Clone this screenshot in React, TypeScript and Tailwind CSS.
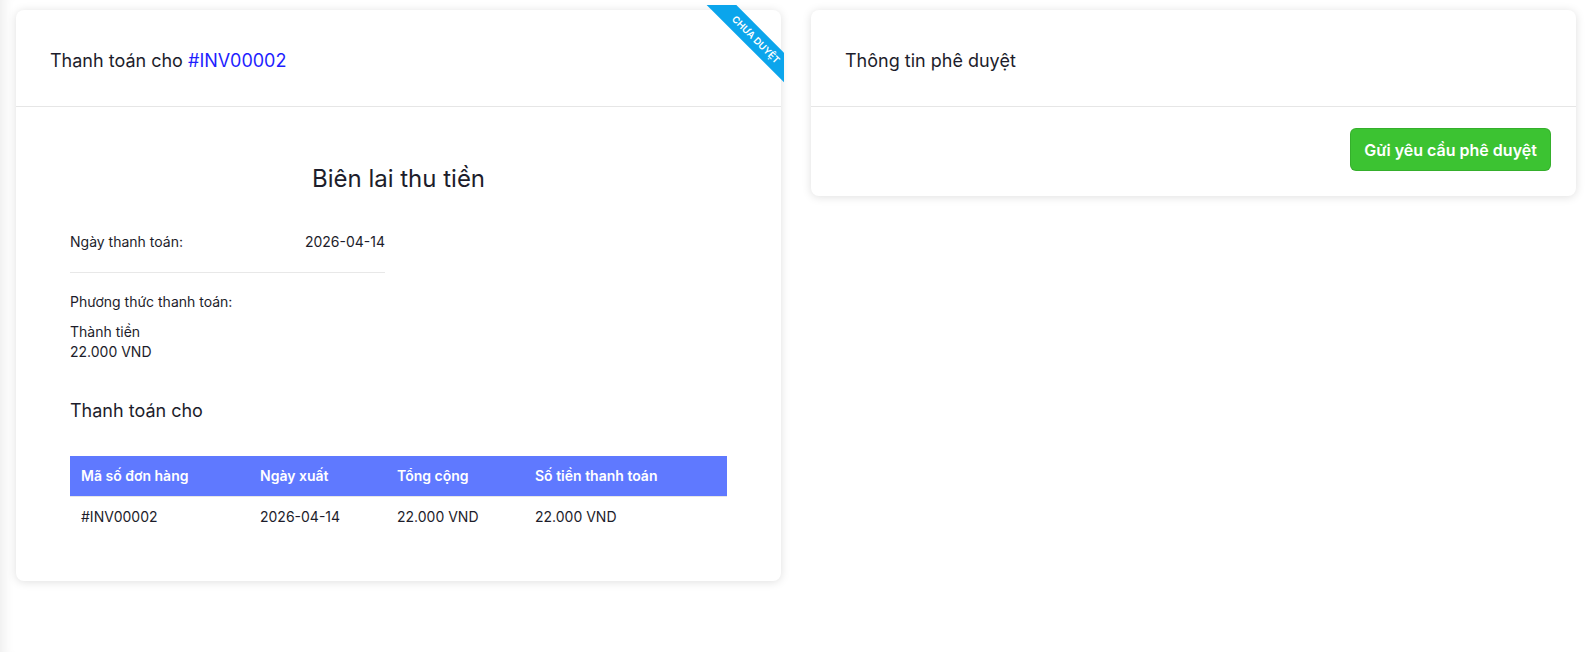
import React from 'react'

// ── Receipt data ─────────────────────────────────────────────────────────────

const INVOICE = {
  code: '#INV00002',
  date: '2026-04-14',
  total: '22.000 VND',
  paid: '22.000 VND',
}

const COLUMNS = [
  { label: 'Mã số đơn hàng', width: 'w-[179px]' },
  { label: 'Ngày xuất', width: 'w-[137px]' },
  { label: 'Tổng cộng', width: 'w-[138px]' },
  { label: 'Số tiền thanh toán', width: '' },
]

// ── Corner ribbon ────────────────────────────────────────────────────────────

function Ribbon({ text }: { text: string }) {
  return (
    <div className="pointer-events-none absolute -right-[3px] -top-[5px] h-[88px] w-[88px] overflow-hidden">
      <div className="absolute left-[-7px] top-[24px] flex h-[21px] w-[134px] rotate-45 items-center justify-center bg-[#0ba5ec] text-[9.5px] font-semibold uppercase leading-none text-white">
        {text}
      </div>
    </div>
  )
}

// ── Card shell ───────────────────────────────────────────────────────────────

function Card({ title, children, ribbon }: { title: React.ReactNode; children: React.ReactNode; ribbon?: string }) {
  return (
    <div className="relative rounded-lg bg-white shadow-[0_1px_10px_rgba(0,0,0,0.13)]">
      {ribbon && <Ribbon text={ribbon} />}
      <div className="flex h-[97px] items-center border-b border-[#e6e6e6] px-[34px] pt-[4px] text-[18px] text-[#1d1d2b]">
        {title}
      </div>
      {children}
    </div>
  )
}

// ── Page ─────────────────────────────────────────────────────────────────────

export default function App() {
  return (
    <div
      className="min-h-[652px] bg-white shadow-[inset_14px_0_12px_-10px_rgba(0,0,0,0.07)]"
      style={{ fontFamily: 'Inter, "Noto Sans", sans-serif' }}
    >
      <div className="grid grid-cols-2 items-start gap-[30px] pl-4 pr-[9px] pt-[10px]">
        {/* Receipt */}
        <Card
          ribbon="Chưa duyệt"
          title={
            <span>
              Thanh toán cho <span className="text-[#1f1fff]">{INVOICE.code}</span>
            </span>
          }
        >
          <div className="px-[54px] pb-[45px] pt-[56px] text-[#1d1d2b]">
            <h2 className="text-center text-[24px] leading-8">Biên lai thu tiền</h2>

            <div className="mt-[37px] w-[315px] text-[14px] leading-5">
              <div className="flex justify-between border-b border-[#e8e8e8] pb-5">
                <span>Ngày thanh toán:</span>
                <span>{INVOICE.date}</span>
              </div>
              <div className="mt-[19px]">Phương thức thanh toán:</div>
              <div className="mt-[10px]">Thành tiền</div>
              <div>{INVOICE.total}</div>
            </div>

            <h3 className="mt-[35px] text-[18px] leading-7">Thanh toán cho</h3>

            <table className="mt-[31px] w-full border-collapse text-left text-[14px]">
              <thead>
                <tr className="h-[40px] border-b border-[#e6e6e6] bg-[#5f79ff] text-white">
                  {COLUMNS.map((c) => (
                    <th key={c.label} className={`${c.width} pl-[11px] font-semibold`}>
                      {c.label}
                    </th>
                  ))}
                </tr>
              </thead>
              <tbody>
                <tr className="h-[40px]">
                  <td className="pl-[11px]">{INVOICE.code}</td>
                  <td className="pl-[11px]">{INVOICE.date}</td>
                  <td className="pl-[11px]">{INVOICE.total}</td>
                  <td className="pl-[11px]">{INVOICE.paid}</td>
                </tr>
              </tbody>
            </table>
          </div>
        </Card>

        {/* Approval */}
        <Card title="Thông tin phê duyệt">
          <div className="flex justify-end pb-[25px] pl-[34px] pr-[25px] pt-[21px]">
            <button className="h-[43px] w-[201px] rounded-md border border-black/10 bg-[#3cc332] text-[16px] font-semibold text-white">
              Gửi yêu cầu phê duyệt
            </button>
          </div>
        </Card>
      </div>
    </div>
  )
}
